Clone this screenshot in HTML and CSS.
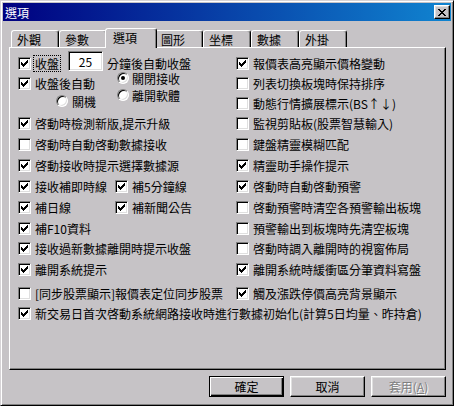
FILE: index.html
```html
<!DOCTYPE html>
<html lang="zh-Hant">
<head>
<meta charset="utf-8">
<title>選項</title>
<link rel="stylesheet" href="styles.css">
</head>
<body>
<div class="window">
  <div class="titlebar">
    <span class="title">選項</span>
    <span class="close"><svg width="8" height="7" viewBox="0 0 8 7" shape-rendering="crispEdges"><path d="M0 0h2v1H0zM6 0h2v1H6zM1 1h2v1H1zM5 1h2v1H5zM2 2h4v1H2zM3 3h2v1H3zM2 4h4v1H2zM1 5h2v1H1zM5 5h2v1H5zM0 6h2v1H0zM6 6h2v1H6z"/></svg></span>
  </div>

  <div class="tabs">
    <div class="tab">外觀</div>
    <div class="tab">參數</div>
    <div class="tab sel">選項</div>
    <div class="tab">圖形</div>
    <div class="tab">坐標</div>
    <div class="tab">數據</div>
    <div class="tab">外掛</div>
  </div>

  <div class="panel">
    <div class="grid">
      <!-- row 1 -->
      <div class="opt first">
        <span class="cb"><svg viewBox="0 0 7 7" width="7" height="7" shape-rendering="crispEdges"><path d="M0 2h1v3H0zM1 3h1v3H1zM2 4h1v3H2zM3 3h1v3H3zM4 2h1v3H4zM5 1h1v3H5zM6 0h1v3H6z"/></svg></span>
        <span class="focus">收盤</span>
        <span class="num">25</span>
        <span class="after">分鐘後自動收盤</span>
      </div>
      <div class="opt"><span class="cb"><svg viewBox="0 0 7 7" width="7" height="7" shape-rendering="crispEdges"><path d="M0 2h1v3H0zM1 3h1v3H1zM2 4h1v3H2zM3 3h1v3H3zM4 2h1v3H4zM5 1h1v3H5zM6 0h1v3H6z"/></svg></span><span>報價表高亮顯示價格變動</span></div>

      <!-- rows 2-3 -->
      <div class="autoclose">
        <div class="opt ac-main"><span class="cb"><svg viewBox="0 0 7 7" width="7" height="7" shape-rendering="crispEdges"><path d="M0 2h1v3H0zM1 3h1v3H1zM2 4h1v3H2zM3 3h1v3H3zM4 2h1v3H4zM5 1h1v3H5zM6 0h1v3H6z"/></svg></span><span>收盤後自動</span></div>
        <div class="radios">
          <div class="opt"><span class="rb on"></span><span>關閉接收</span></div>
          <div class="opt"><span class="rb"></span><span>離開軟體</span></div>
        </div>
        <div class="opt ac-off"><span class="rb"></span><span>關機</span></div>
      </div>
      <div class="opt"><span class="cb"></span><span>列表切換板塊時保持排序</span></div>
      <div class="opt"><span class="cb"></span><span>動態行情擴展標示(BS↑↓)</span></div>

      <!-- row 4 -->
      <div class="opt"><span class="cb"><svg viewBox="0 0 7 7" width="7" height="7" shape-rendering="crispEdges"><path d="M0 2h1v3H0zM1 3h1v3H1zM2 4h1v3H2zM3 3h1v3H3zM4 2h1v3H4zM5 1h1v3H5zM6 0h1v3H6z"/></svg></span><span>啓動時檢測新版,提示升級</span></div>
      <div class="opt"><span class="cb"></span><span>監視剪貼板(股票智慧輸入)</span></div>

      <!-- row 5 -->
      <div class="opt"><span class="cb"></span><span>啓動時自動啓動數據接收</span></div>
      <div class="opt"><span class="cb"></span><span>鍵盤精靈模糊匹配</span></div>

      <!-- row 6 -->
      <div class="opt"><span class="cb"><svg viewBox="0 0 7 7" width="7" height="7" shape-rendering="crispEdges"><path d="M0 2h1v3H0zM1 3h1v3H1zM2 4h1v3H2zM3 3h1v3H3zM4 2h1v3H4zM5 1h1v3H5zM6 0h1v3H6z"/></svg></span><span>啓動接收時提示選擇數據源</span></div>
      <div class="opt"><span class="cb"><svg viewBox="0 0 7 7" width="7" height="7" shape-rendering="crispEdges"><path d="M0 2h1v3H0zM1 3h1v3H1zM2 4h1v3H2zM3 3h1v3H3zM4 2h1v3H4zM5 1h1v3H5zM6 0h1v3H6z"/></svg></span><span>精靈助手操作提示</span></div>

      <!-- row 7 -->
      <div class="pair">
        <div class="opt"><span class="cb"><svg viewBox="0 0 7 7" width="7" height="7" shape-rendering="crispEdges"><path d="M0 2h1v3H0zM1 3h1v3H1zM2 4h1v3H2zM3 3h1v3H3zM4 2h1v3H4zM5 1h1v3H5zM6 0h1v3H6z"/></svg></span><span>接收補即時線</span></div>
        <div class="opt"><span class="cb"><svg viewBox="0 0 7 7" width="7" height="7" shape-rendering="crispEdges"><path d="M0 2h1v3H0zM1 3h1v3H1zM2 4h1v3H2zM3 3h1v3H3zM4 2h1v3H4zM5 1h1v3H5zM6 0h1v3H6z"/></svg></span><span>補5分鐘線</span></div>
      </div>
      <div class="opt"><span class="cb"><svg viewBox="0 0 7 7" width="7" height="7" shape-rendering="crispEdges"><path d="M0 2h1v3H0zM1 3h1v3H1zM2 4h1v3H2zM3 3h1v3H3zM4 2h1v3H4zM5 1h1v3H5zM6 0h1v3H6z"/></svg></span><span>啓動時自動啓動預警</span></div>

      <!-- row 8 -->
      <div class="pair">
        <div class="opt"><span class="cb"><svg viewBox="0 0 7 7" width="7" height="7" shape-rendering="crispEdges"><path d="M0 2h1v3H0zM1 3h1v3H1zM2 4h1v3H2zM3 3h1v3H3zM4 2h1v3H4zM5 1h1v3H5zM6 0h1v3H6z"/></svg></span><span>補日線</span></div>
        <div class="opt"><span class="cb"><svg viewBox="0 0 7 7" width="7" height="7" shape-rendering="crispEdges"><path d="M0 2h1v3H0zM1 3h1v3H1zM2 4h1v3H2zM3 3h1v3H3zM4 2h1v3H4zM5 1h1v3H5zM6 0h1v3H6z"/></svg></span><span>補新聞公告</span></div>
      </div>
      <div class="opt"><span class="cb"></span><span>啓動預警時清空各預警輸出板塊</span></div>

      <!-- row 9 -->
      <div class="opt"><span class="cb"><svg viewBox="0 0 7 7" width="7" height="7" shape-rendering="crispEdges"><path d="M0 2h1v3H0zM1 3h1v3H1zM2 4h1v3H2zM3 3h1v3H3zM4 2h1v3H4zM5 1h1v3H5zM6 0h1v3H6z"/></svg></span><span>補F10資料</span></div>
      <div class="opt"><span class="cb"></span><span>預警輸出到板塊時先清空板塊</span></div>

      <!-- row 10 -->
      <div class="opt"><span class="cb"><svg viewBox="0 0 7 7" width="7" height="7" shape-rendering="crispEdges"><path d="M0 2h1v3H0zM1 3h1v3H1zM2 4h1v3H2zM3 3h1v3H3zM4 2h1v3H4zM5 1h1v3H5zM6 0h1v3H6z"/></svg></span><span>接收過新數據離開時提示收盤</span></div>
      <div class="opt"><span class="cb"></span><span>啓動時調入離開時的視窗佈局</span></div>

      <!-- row 11 -->
      <div class="opt"><span class="cb"><svg viewBox="0 0 7 7" width="7" height="7" shape-rendering="crispEdges"><path d="M0 2h1v3H0zM1 3h1v3H1zM2 4h1v3H2zM3 3h1v3H3zM4 2h1v3H4zM5 1h1v3H5zM6 0h1v3H6z"/></svg></span><span>離開系統提示</span></div>
      <div class="opt"><span class="cb"><svg viewBox="0 0 7 7" width="7" height="7" shape-rendering="crispEdges"><path d="M0 2h1v3H0zM1 3h1v3H1zM2 4h1v3H2zM3 3h1v3H3zM4 2h1v3H4zM5 1h1v3H5zM6 0h1v3H6z"/></svg></span><span>離開系統時緩衝區分筆資料寫盤</span></div>

      <!-- row 12 -->
      <div class="opt"><span class="cb"></span><span>[同步股票顯示]報價表定位同步股票</span></div>
      <div class="opt"><span class="cb"><svg viewBox="0 0 7 7" width="7" height="7" shape-rendering="crispEdges"><path d="M0 2h1v3H0zM1 3h1v3H1zM2 4h1v3H2zM3 3h1v3H3zM4 2h1v3H4zM5 1h1v3H5zM6 0h1v3H6z"/></svg></span><span>觸及漲跌停價高亮背景顯示</span></div>

      <!-- row 13 -->
      <div class="opt full"><span class="cb"><svg viewBox="0 0 7 7" width="7" height="7" shape-rendering="crispEdges"><path d="M0 2h1v3H0zM1 3h1v3H1zM2 4h1v3H2zM3 3h1v3H3zM4 2h1v3H4zM5 1h1v3H5zM6 0h1v3H6z"/></svg></span><span>新交易日首次啓動系統網路接收時進行數據初始化(計算5日均量、昨持倉)</span></div>
    </div>
  </div>

  <div class="buttons">
    <button class="btn def">確定</button>
    <button class="btn">取消</button>
    <button class="btn dis">套用(<u>A</u>)</button>
  </div>
</div>
</body>
</html>
```

FILE: styles.css
```css
* { box-sizing: border-box; }

html, body {
  margin: 0;
  padding: 0;
}

body {
  width: 454px;
  height: 406px;
  overflow: hidden;
  background: #c6c3c6;
  color: #000;
  font-family: "Noto Sans CJK TC", "Noto Sans CJK SC", sans-serif;
  font-size: 12px;
  line-height: 13px;
}

.window {
  width: 454px;
  height: 406px;
  border: 1px solid;
  border-color: #d6d3d6 #000 #000 #d6d3d6;
  box-shadow: inset 1px 1px #fff, inset -1px -1px #808080;
  padding: 2px;
  display: flex;
  flex-direction: column;
}

/* title bar */
.titlebar {
  height: 18px;
  flex: none;
  display: flex;
  align-items: center;
  padding-left: 2px;
  background: linear-gradient(to right, #000080, #1084d0);
  color: #fff;
}

.title {
  line-height: 13px;
}

.close {
  margin-left: auto;
  margin-right: 1px;
  width: 16px;
  height: 14px;
  border: 1px solid;
  border-color: #fff #000 #000 #fff;
  box-shadow: inset -1px -1px #808080, inset 1px 1px #dfdfdf;
  background: #c6c3c6;
  display: flex;
  align-items: center;
  justify-content: center;
  padding: 0 0 0 0;
}

.close svg {
  display: block;
  fill: #000;
}

/* tabs */
.tabs {
  margin-top: 7px;
  height: 19px;
  flex: none;
  display: flex;
  align-items: flex-end;
  padding-left: 8px;
  position: relative;
  z-index: 2;
}

.tab {
  width: 48px;
  height: 17px;
  flex: none;
  border: 1px solid;
  border-bottom: 0;
  border-color: #fff #000 transparent #fff;
  border-radius: 3px 3px 0 0;
  box-shadow: inset -1px 0 #808080;
  padding-left: 5px;
  display: flex;
  align-items: center;
  white-space: nowrap;
}

.tab.sel {
  width: 52px;
  height: 20px;
  margin: 0 -2px -1px;
  padding-left: 7px;
  padding-bottom: 3px;
  background: #c6c3c6;
  position: relative;
  z-index: 1;
}

/* panel */
.panel {
  margin-left: 6px;
  width: 437px;
  height: 323px;
  flex: none;
  border: 1px solid;
  border-color: #fff #000 #000 #fff;
  box-shadow: inset -1px -1px #808080;
  padding: 9px 0 0 8px;
}

.grid {
  display: grid;
  grid-template-columns: 218px 1fr;
  grid-template-rows: 20px 20px 20px 21px 21px 21px 21px 21px 20px 21px 24px 20px 20px;
}

.opt {
  display: flex;
  align-items: flex-start;
  gap: 4px;
  white-space: nowrap;
}

.full {
  grid-column: 1 / span 2;
}

.cb {
  width: 13px;
  height: 13px;
  flex: none;
  border: 1px solid;
  border-color: #808080 #fff #fff #808080;
  box-shadow: inset 1px 1px #000, inset -1px -1px #dfdfdf;
  background: #fff;
  padding: 2px;
}

.cb svg {
  display: block;
  fill: #000;
}

.rb {
  width: 12px;
  height: 12px;
  flex: none;
  border-radius: 50%;
  border: 1px solid;
  border-color: #808080 #fff #fff #808080;
  box-shadow: inset 1px 1px #000, inset -1px -1px #dfdfdf;
  background: #fff;
  display: flex;
  align-items: center;
  justify-content: center;
}

.rb.on::after {
  content: "";
  width: 4px;
  height: 4px;
  border-radius: 50%;
  background: #000;
}

/* first row */
.focus {
  outline: 1px dotted #000;
  outline-offset: 1px;
}

.num {
  width: 35px;
  height: 20px;
  flex: none;
  margin: -6px 0 0 5px;
  border: 1px solid;
  border-color: #808080 #fff #fff #808080;
  box-shadow: inset 1px 1px #000, inset -1px -1px #dfdfdf;
  background: #fff;
  display: flex;
  align-items: center;
  justify-content: center;
}

.after {
  margin-left: 0;
}

/* close-after group */
.autoclose {
  grid-row: span 2;
  display: grid;
  grid-template-columns: 99px auto;
  grid-template-rows: 18px auto;
}

.ac-main {
  grid-column: 1;
  grid-row: 1;
}

.radios {
  grid-column: 2;
  grid-row: 1 / span 2;
  margin-top: -5px;
  display: flex;
  flex-direction: column;
  gap: 4px;
}

.radios .opt {
  gap: 3px;
}

.ac-off {
  grid-column: 1;
  grid-row: 2;
  padding-left: 38px;
}

.pair {
  display: grid;
  grid-template-columns: 97px auto;
}

/* buttons */
.buttons {
  margin-top: 6px;
  display: flex;
  justify-content: flex-end;
  gap: 6px;
  padding-right: 5px;
}

.btn {
  appearance: none;
  width: 75px;
  height: 21px;
  margin: 0;
  padding: 0;
  font: inherit;
  line-height: 13px;
  color: #000;
  background: #c6c3c6;
  border: 1px solid;
  border-color: #fff #000 #000 #fff;
  box-shadow: inset -1px -1px #808080, inset 1px 1px #dfdfdf;
  display: flex;
  align-items: center;
  justify-content: center;
}

.btn.def {
  border-color: #000;
  box-shadow: inset 1px 1px #fff, inset -1px -1px #000, inset -2px -2px #808080;
}

.btn.dis {
  color: #808080;
  text-shadow: 1px 1px #fff;
}
```
